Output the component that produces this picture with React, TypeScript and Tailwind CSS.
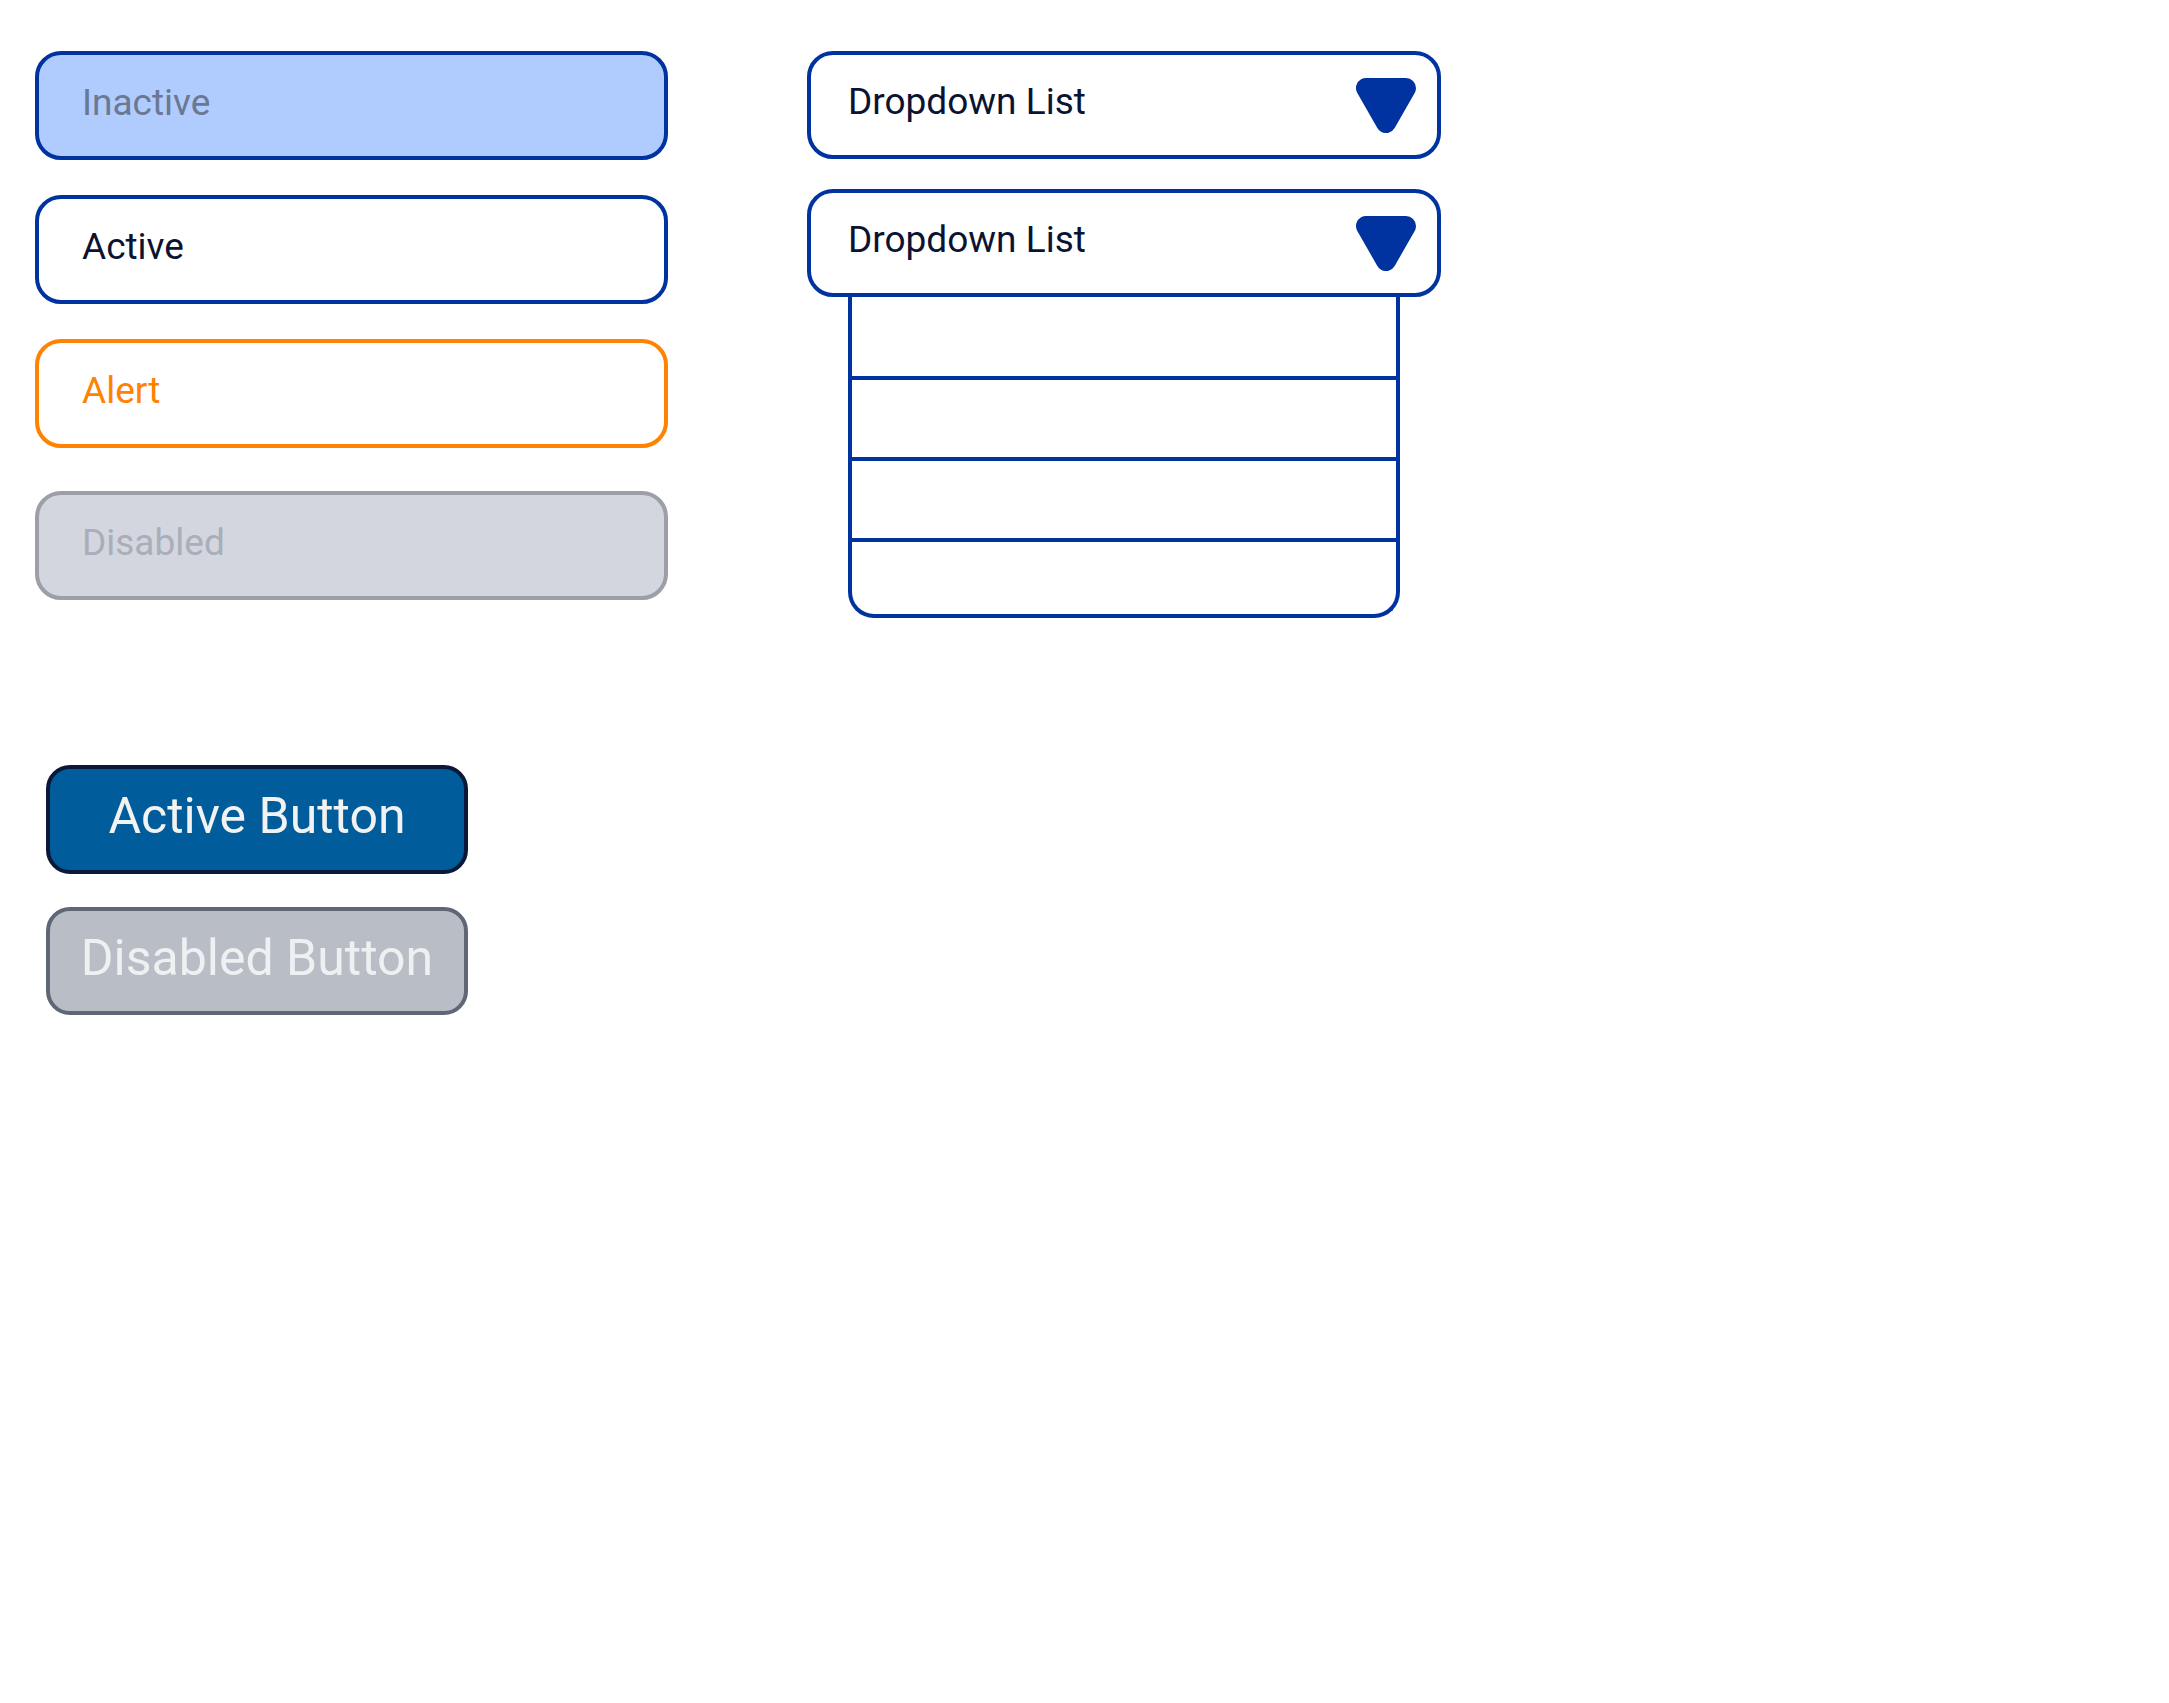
import React from "react";

const font = { fontFamily: "Roboto, 'Noto Sans', Arial, sans-serif" };

function Caret() {
  return (
    <svg width="60" height="55" viewBox="0 0 60 55" aria-hidden>
      <polygon
        points="10,10 50,10 30,45"
        fill="#0033a0"
        stroke="#0033a0"
        strokeWidth="20"
        strokeLinejoin="round"
      />
    </svg>
  );
}

function Field({ label, box, text }: { label: string; box: string; text: string }) {
  return (
    <div className={`flex h-[109px] items-center rounded-[26px] border-[4px] pl-[43px] pb-[6px] text-[37px] ${box}`}>
      <span className={text}>{label}</span>
    </div>
  );
}

function Dropdown({ className = "" }: { className?: string }) {
  return (
    <div className={`flex h-[108px] items-center justify-between rounded-[26px] border-[4px] border-[#0033a0] bg-white pl-[37px] pr-[21px] ${className}`}>
      <span className="pb-[6px] text-[37px] text-[#0b1333]">Dropdown List</span>
      <Caret />
    </div>
  );
}

const rowClass = [
  "h-[83px] border-b-[4px] border-[#0033a0]",
  "h-[81px] border-b-[4px] border-[#0033a0]",
  "h-[81px] border-b-[4px] border-[#0033a0]",
  "h-[72px]",
];

export default function App() {
  return (
    <div className="min-h-screen bg-white pl-[35px] pt-[51px]" style={font}>
      <div className="flex items-start gap-[139px]">
        {/* inputs + buttons */}
        <div className="flex w-[633px] flex-col">
          <Field label="Inactive" box="border-[#0033a0] bg-[#b0cbfe]" text="text-[#6b7892]" />
          <div className="mt-[35px]">
            <Field label="Active" box="border-[#0033a0] bg-white" text="text-[#0b1333]" />
          </div>
          <div className="mt-[35px]">
            <Field label="Alert" box="border-[#ff8200] bg-white" text="text-[#ff8200]" />
          </div>
          <div className="mt-[43px]">
            <Field label="Disabled" box="border-[#9c9fa8] bg-[#d3d6de]" text="text-[#a9aeb8]" />
          </div>

          <button
            type="button"
            className="ml-[11px] mt-[165px] flex h-[109px] w-[422px] items-center justify-center rounded-[24px] border-[4px] border-[#0b1938] bg-[#005c9a] pb-[6px] text-[50px] text-[#f2f2f2]"
          >
            Active Button
          </button>
          <button
            type="button"
            disabled
            className="ml-[11px] mt-[33px] flex h-[108px] w-[422px] items-center justify-center rounded-[24px] border-[4px] border-[#5f6675] bg-[#b9bdc6] pb-[6px] text-[50px] text-[#eef0f2]"
          >
            Disabled Button
          </button>
        </div>

        {/* dropdowns */}
        <div className="flex w-[634px] flex-col">
          <Dropdown />
          <Dropdown className="relative z-10 mt-[30px]" />
          <div className="mx-[41px] overflow-hidden rounded-b-[26px] border-x-[4px] border-b-[4px] border-[#0033a0] bg-white">
            {rowClass.map((c, i) => (
              <div key={i} className={c} />
            ))}
          </div>
        </div>
      </div>
    </div>
  );
}
